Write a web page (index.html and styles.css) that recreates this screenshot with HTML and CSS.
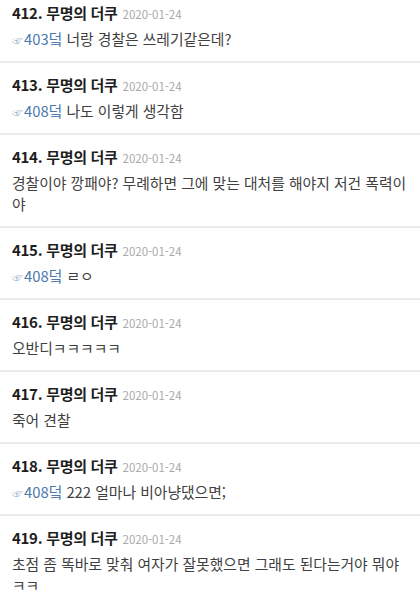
FILE: index.html
```html
<!DOCTYPE html>
<html lang="ko">
<head>
<meta charset="UTF-8"/>
<meta name="viewport" content="width=device-width,initial-scale=1.0"/>
<title>댓글</title>
<link rel="stylesheet" href="styles.css">
</head>
<body>

<!-- ─── COMMENTS ─────────────────────────────────────────────────────── -->
<ul class="comments">
  <li class="cmt">
    <div class="cmt-head"><strong>412. 무명의 더쿠</strong><span class="date">2020-01-24</span></div>
    <p class="cmt-body"><a class="reply" href="#c403"><i>☞</i>403덬</a> 너랑 경찰은 쓰레기같은데?</p>
  </li>
  <li class="cmt">
    <div class="cmt-head"><strong>413. 무명의 더쿠</strong><span class="date">2020-01-24</span></div>
    <p class="cmt-body"><a class="reply" href="#c408"><i>☞</i>408덬</a> 나도 이렇게 생각함</p>
  </li>
  <li class="cmt">
    <div class="cmt-head"><strong>414. 무명의 더쿠</strong><span class="date">2020-01-24</span></div>
    <p class="cmt-body">경찰이야 깡패야? 무례하면 그에 맞는 대처를 해야지 저건 폭력이야</p>
  </li>
  <li class="cmt">
    <div class="cmt-head"><strong>415. 무명의 더쿠</strong><span class="date">2020-01-24</span></div>
    <p class="cmt-body"><a class="reply" href="#c408"><i>☞</i>408덬</a> ㄹㅇ</p>
  </li>
  <li class="cmt">
    <div class="cmt-head"><strong>416. 무명의 더쿠</strong><span class="date">2020-01-24</span></div>
    <p class="cmt-body">오반디ㅋㅋㅋㅋㅋ</p>
  </li>
  <li class="cmt">
    <div class="cmt-head"><strong>417. 무명의 더쿠</strong><span class="date">2020-01-24</span></div>
    <p class="cmt-body">죽어 견찰</p>
  </li>
  <li class="cmt">
    <div class="cmt-head"><strong>418. 무명의 더쿠</strong><span class="date">2020-01-24</span></div>
    <p class="cmt-body"><a class="reply" href="#c408"><i>☞</i>408덬</a> 222 얼마나 비아냥댔으면;</p>
  </li>
  <li class="cmt">
    <div class="cmt-head"><strong>419. 무명의 더쿠</strong><span class="date">2020-01-24</span></div>
    <p class="cmt-body">초점 좀 똑바로 맞춰 여자가 잘못했으면 그래도 된다는거야 뭐야ㅋㅋ</p>
  </li>
</ul>

</body>
</html>
```
FILE: styles.css
```css
:root{
  --text:#404040;--head:#1e1e1e;--muted:#a9a9a9;--link:#4b7aad;--line:#ececec;
}
*,*::before,*::after{box-sizing:border-box;margin:0;padding:0}
body{background:#fff;color:var(--text);font-family:"Noto Sans CJK KR","Noto Sans",sans-serif;overflow:hidden}
a{text-decoration:none;color:inherit}

/* ─── COMMENT LIST ────────────────────────────────────────────────────── */
.comments{list-style:none;margin-top:-9px}
.cmt{padding:11px 8px 12px 12px;border-bottom:2px solid var(--line)}
.cmt-head{display:flex;align-items:baseline;gap:5px;height:22px;line-height:22px;overflow:hidden}
.cmt-head strong{font-size:15px;font-weight:700;color:var(--head);letter-spacing:-.3px}
.cmt-head .date{font-size:11.5px;color:var(--muted)}
.cmt-body{margin-top:4px;font-size:14.8px;line-height:21px;color:var(--text)}
.reply{color:var(--link)}
.reply i{font-style:normal;font-size:11px;line-height:0;color:#9fb3cc;margin-right:1px}
```
